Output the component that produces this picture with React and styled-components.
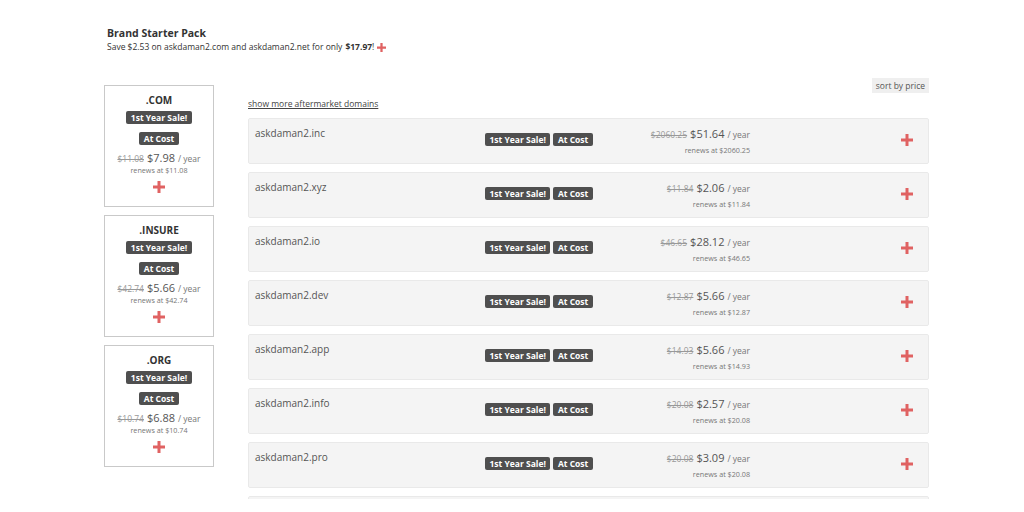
import React from "react";
import styled, { createGlobalStyle } from "styled-components";

const Global = createGlobalStyle`
  html, body {
    margin: 0;
    padding: 0;
    background: #fff;
    font-family: "Open Sans", "Liberation Sans", sans-serif;
    color: #555;
    overflow: hidden;
  }
`;

const Page = styled.div`
  width: 825px;
  margin-left: 104px;
  padding-top: 26px;
`;

const Header = styled.div`
  padding-left: 3px;
`;

const Title = styled.div`
  font-size: 10.5px;
  font-weight: 700;
  color: #333;
  line-height: 14px;
`;

const Subtitle = styled.div`
  font-size: 8.5px;
  color: #333;
  line-height: 14px;
  display: flex;
  align-items: center;

  b {
    margin-left: 3px;
    font-weight: 700;
  }
`;

const Main = styled.div`
  display: flex;
  gap: 34px;
  margin-top: 24px;
`;

const Side = styled.div`
  width: 110px;
  display: flex;
  flex-direction: column;
  gap: 8px;
  padding-top: 7px;
`;

const Card = styled.div`
  box-sizing: border-box;
  height: 122px;
  border: 1.5px solid #c9c9c9;
  display: flex;
  flex-direction: column;
  align-items: center;
  padding-top: 7px;
`;

const Tld = styled.div`
  font-size: 10px;
  font-weight: 700;
  color: #333;
  line-height: 14px;
  margin-bottom: 4px;
`;

const Badge = styled.span`
  display: inline-flex;
  align-items: center;
  height: 13px;
  padding: 0 4.5px;
  background: #4f4f4f;
  color: #fff;
  font-size: 8.5px;
  font-weight: 700;
  border-radius: 2px;
  white-space: nowrap;
  margin-bottom: ${p => p.$stack ? "8px" : "0"};
`;

const Old = styled.span`
  text-decoration: line-through;
  color: #999;
  font-size: 8.5px;
  margin-right: 3px;
`;

const Now = styled.span`
  font-size: 11px;
  color: #555;
`;

const Per = styled.span`
  font-size: 8.5px;
  color: #777;
  margin-left: 3px;
`;

const PriceLine = styled.div`
  line-height: 13px;
  white-space: nowrap;
  margin-top: ${p => p.$gap || 0};
`;

const Renew = styled.div`
  font-size: 7.2px;
  color: #777;
  line-height: 10px;
  white-space: nowrap;
  margin-top: ${p => p.$gap || 0};
`;

const PlusWrap = styled.span`
  display: inline-flex;
  margin-top: ${p => p.$top || 0};
  margin-left: ${p => p.$left || 0};
`;

const Plus = ({ top, left, size = 12 }) => (
  <PlusWrap $top={top} $left={left}>
    <svg width={size} height={size} viewBox="0 0 12 12">
      <path d="M4.5 0h3v4.5H12v3H7.5V12h-3V7.5H0v-3h4.5z" fill="#e06262" />
    </svg>
  </PlusWrap>
);

const List = styled.div`
  flex: 1;
  display: flex;
  flex-direction: column;
`;

const TopBar = styled.div`
  display: flex;
  justify-content: flex-end;
`;

const SortButton = styled.div`
  background: #efefef;
  font-size: 8.5px;
  color: #555;
  height: 15px;
  line-height: 15px;
  padding: 0 4px;
`;

const MoreLink = styled.div`
  font-size: 8.5px;
  color: #444;
  text-decoration: underline;
  line-height: 12px;
  margin-top: 5px;
  margin-bottom: 8px;
`;

const Rows = styled.div`
  display: flex;
  flex-direction: column;
  gap: 8px;
  height: 381px;
  overflow: hidden;
`;

const Row = styled.div`
  box-sizing: border-box;
  flex: none;
  height: 46px;
  background: #f4f4f4;
  border: 1px solid #e9e9e9;
  border-radius: 2px;
  display: grid;
  grid-template-columns: 230px 115px 150px 1fr;
  align-items: center;
  padding-left: 6px;
  padding-right: 15px;
`;

const Domain = styled.div`
  font-size: 10px;
  color: #555;
  align-self: start;
  padding-top: 7px;
`;

const Badges = styled.div`
  display: flex;
  gap: 3px;
  margin-top: -4px;
`;

const Price = styled.div`
  text-align: right;
  margin-top: -2px;
`;

const Act = styled.div`
  display: flex;
  justify-content: flex-end;
  margin-top: -3px;
`;

const cards = [
  { tld: ".COM", old: "$11.08", now: "$7.98" },
  { tld: ".INSURE", old: "$42.74", now: "$5.66" },
  { tld: ".ORG", old: "$10.74", now: "$6.88" },
];

const rows = [
  { name: "askdaman2.inc", old: "$2060.25", now: "$51.64" },
  { name: "askdaman2.xyz", old: "$11.84", now: "$2.06" },
  { name: "askdaman2.io", old: "$46.65", now: "$28.12" },
  { name: "askdaman2.dev", old: "$12.87", now: "$5.66" },
  { name: "askdaman2.app", old: "$14.93", now: "$5.66" },
  { name: "askdaman2.info", old: "$20.08", now: "$2.57" },
  { name: "askdaman2.pro", old: "$20.08", now: "$3.09" },
];

export default function App() {
  return (
    <>
      <Global />
      <Page>
        <Header>
          <Title>Brand Starter Pack</Title>
          <Subtitle>
            Save $2.53 on askdaman2.com and askdaman2.net for only<b>$17.97</b>!
            <Plus left="3px" size={9} />
          </Subtitle>
        </Header>
        <Main>
          <Side>
            {cards.map(c => (
              <Card key={c.tld}>
                <Tld>{c.tld}</Tld>
                <Badge $stack>1st Year Sale!</Badge>
                <Badge>At Cost</Badge>
                <PriceLine $gap="5px">
                  <Old>{c.old}</Old>
                  <Now>{c.now}</Now>
                  <Per>/ year</Per>
                </PriceLine>
                <Renew>renews at {c.old}</Renew>
                <Plus top="6px" />
              </Card>
            ))}
          </Side>
          <List>
            <TopBar>
              <SortButton>sort by price</SortButton>
            </TopBar>
            <MoreLink>show more aftermarket domains</MoreLink>
            <Rows>
              {rows.map(r => (
                <Row key={r.name}>
                  <Domain>{r.name}</Domain>
                  <Badges>
                    <Badge>1st Year Sale!</Badge>
                    <Badge>At Cost</Badge>
                  </Badges>
                  <Price>
                    <PriceLine>
                      <Old>{r.old}</Old>
                      <Now>{r.now}</Now>
                      <Per>/ year</Per>
                    </PriceLine>
                    <Renew $gap="4px">renews at {r.old}</Renew>
                  </Price>
                  <Act>
                    <Plus />
                  </Act>
                </Row>
              ))}
              <Row />
            </Rows>
          </List>
        </Main>
      </Page>
    </>
  );
}
